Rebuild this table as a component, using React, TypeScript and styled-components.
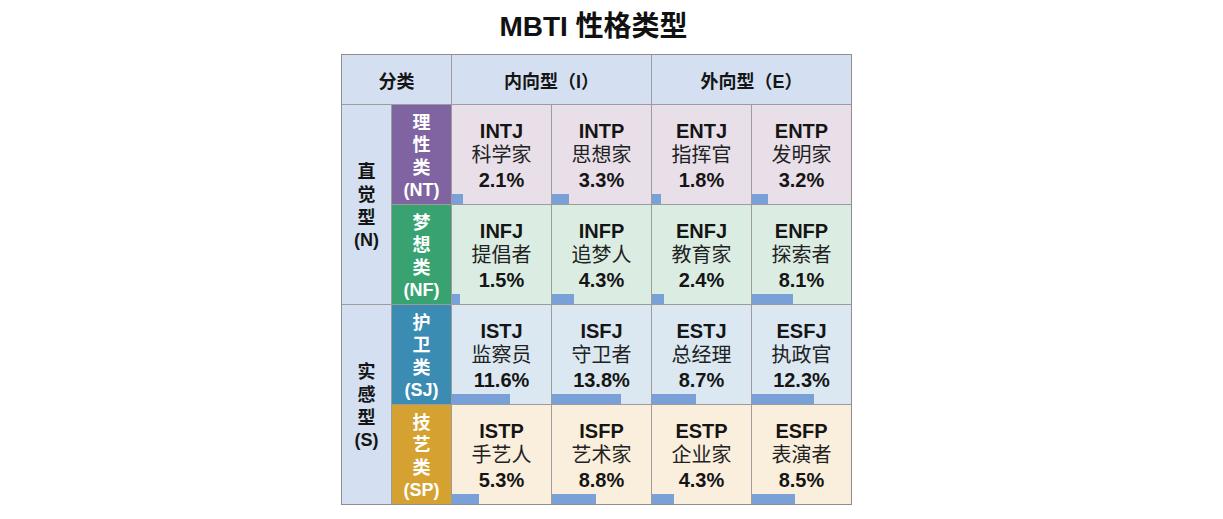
import React from "react";
import styled, { createGlobalStyle } from "styled-components";

type TypeCell = { code: string; name: string; pct: number };
type Group = { label: string[]; color: string; bg: string; cells: TypeCell[] };

const groups: Group[] = [
  {
    label: ["理", "性", "类", "(NT)"],
    color: "#8064a2",
    bg: "#e8dfe8",
    cells: [
      { code: "INTJ", name: "科学家", pct: 2.1 },
      { code: "INTP", name: "思想家", pct: 3.3 },
      { code: "ENTJ", name: "指挥官", pct: 1.8 },
      { code: "ENTP", name: "发明家", pct: 3.2 },
    ],
  },
  {
    label: ["梦", "想", "类", "(NF)"],
    color: "#38a271",
    bg: "#dbede3",
    cells: [
      { code: "INFJ", name: "提倡者", pct: 1.5 },
      { code: "INFP", name: "追梦人", pct: 4.3 },
      { code: "ENFJ", name: "教育家", pct: 2.4 },
      { code: "ENFP", name: "探索者", pct: 8.1 },
    ],
  },
  {
    label: ["护", "卫", "类", "(SJ)"],
    color: "#3b8cb3",
    bg: "#dbe8f1",
    cells: [
      { code: "ISTJ", name: "监察员", pct: 11.6 },
      { code: "ISFJ", name: "守卫者", pct: 13.8 },
      { code: "ESTJ", name: "总经理", pct: 8.7 },
      { code: "ESFJ", name: "执政官", pct: 12.3 },
    ],
  },
  {
    label: ["技", "艺", "类", "(SP)"],
    color: "#d5a231",
    bg: "#faeedc",
    cells: [
      { code: "ISTP", name: "手艺人", pct: 5.3 },
      { code: "ISFP", name: "艺术家", pct: 8.8 },
      { code: "ESTP", name: "企业家", pct: 4.3 },
      { code: "ESFP", name: "表演者", pct: 8.5 },
    ],
  },
];

const GlobalStyle = createGlobalStyle`
  body {
    margin: 0;
    background: #ffffff;
    font-family: "Liberation Sans", "Noto Sans CJK SC", sans-serif;
    color: #151515;
  }
`;

const Page = styled.div`
  display: flex;
  flex-direction: column;
  align-items: flex-start;
  padding: 9px 0 0 341px;
`;

const Wrap = styled.div`
  display: flex;
  flex-direction: column;
  align-items: center;
  width: 511px;
`;

const Title = styled.h1`
  margin: 0 6px 0 0;
  height: 45px;
  line-height: 36px;
  font-size: 28px;
  font-weight: 700;
  color: #111;
`;

const Table = styled.div`
  display: grid;
  grid-template-columns: 49px 59px repeat(4, 99px);
  grid-template-rows: 49px repeat(4, 99px);
  gap: 1px;
  background: #9c9c9c;
  border: 1px solid #8e8e8e;
`;

const Head = styled.div<{ $span: number }>`
  grid-column: span ${(p) => p.$span};
  background: #d4e0f1;
  display: flex;
  align-items: center;
  justify-content: center;
  font-size: 18px;
  font-weight: 700;
`;

const Axis = styled.div`
  grid-row: span 2;
  background: #d4e0f1;
  display: flex;
  flex-direction: column;
  align-items: center;
  justify-content: center;
  padding-top: 4px;
  font-size: 18px;
  font-weight: 700;
  line-height: 22.7px;
`;

const Side = styled.div<{ $color: string }>`
  background: ${(p) => p.$color};
  color: #fff;
  display: flex;
  flex-direction: column;
  align-items: center;
  justify-content: center;
  font-size: 18px;
  font-weight: 700;
  line-height: 22.5px;
  padding-top: 4px;
`;

const Cell = styled.div<{ $bg: string }>`
  background: ${(p) => p.$bg};
  display: flex;
  flex-direction: column;
`;

const CellText = styled.div`
  flex: 1;
  display: flex;
  flex-direction: column;
  align-items: center;
  justify-content: center;
  padding-top: 12px;
  font-size: 20px;
  line-height: 24.5px;
`;

const Code = styled.span`
  font-weight: 700;
`;

const Name = styled.span`
  font-weight: 400;
  color: #222;
`;

const Pct = styled.span`
  font-weight: 700;
`;

const Bar = styled.div`
  height: 10px;
  background: #79a1d8;
  align-self: flex-start;
`;

export default function App() {
  return (
    <>
      <GlobalStyle />
      <Page>
        <Wrap>
          <Title>MBTI 性格类型</Title>
          <Table>
            <Head $span={2}>分类</Head>
            <Head $span={2}>内向型（I）</Head>
            <Head $span={2}>外向型（E）</Head>
            {groups.map((g, gi) => (
              <React.Fragment key={g.label.join("")}>
                {gi % 2 === 0 && (
                  <Axis>
                    {(gi === 0 ? ["直", "觉", "型", "(N)"] : ["实", "感", "型", "(S)"]).map((t) => (
                      <span key={t}>{t}</span>
                    ))}
                  </Axis>
                )}
                <Side $color={g.color}>
                  {g.label.map((t) => (
                    <span key={t}>{t}</span>
                  ))}
                </Side>
                {g.cells.map((c) => (
                  <Cell key={c.code} $bg={g.bg}>
                    <CellText>
                      <Code>{c.code}</Code>
                      <Name>{c.name}</Name>
                      <Pct>{c.pct.toFixed(1)}%</Pct>
                    </CellText>
                    <Bar style={{ width: `${c.pct * 5}px` }} />
                  </Cell>
                ))}
              </React.Fragment>
            ))}
          </Table>
        </Wrap>
      </Page>
    </>
  );
}
